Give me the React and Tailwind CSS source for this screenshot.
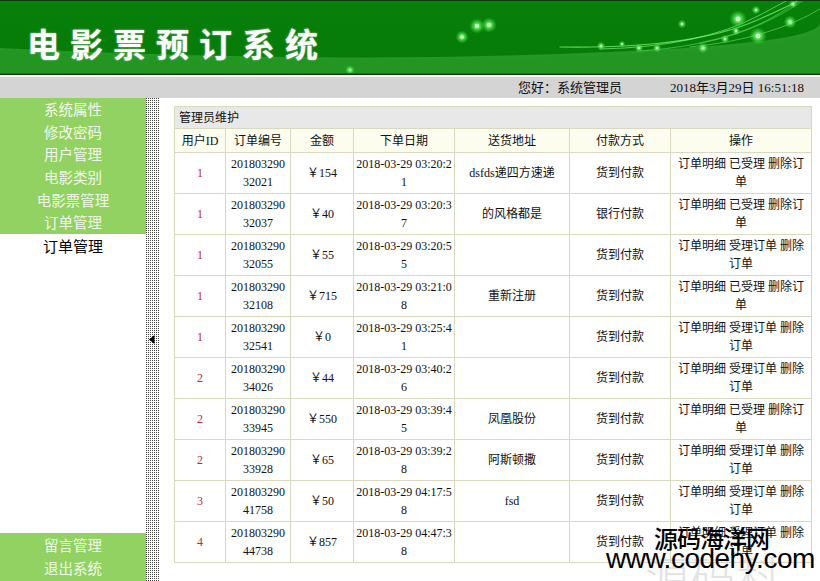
import React from "react";

const rows = [
  ["1", "20180329032021", "￥154", "2018-03-29 03:20:21", "dsfds递四方速递", "货到付款", "订单明细 已受理 删除订单"],
  ["1", "20180329032037", "￥40", "2018-03-29 03:20:37", "的风格都是", "银行付款", "订单明细 已受理 删除订单"],
  ["1", "20180329032055", "￥55", "2018-03-29 03:20:55", "", "货到付款", "订单明细 受理订单 删除订单"],
  ["1", "20180329032108", "￥715", "2018-03-29 03:21:08", "重新注册", "货到付款", "订单明细 已受理 删除订单"],
  ["1", "20180329032541", "￥0", "2018-03-29 03:25:41", "", "货到付款", "订单明细 受理订单 删除订单"],
  ["2", "20180329034026", "￥44", "2018-03-29 03:40:26", "", "货到付款", "订单明细 受理订单 删除订单"],
  ["2", "20180329033945", "￥550", "2018-03-29 03:39:45", "凤凰股份", "货到付款", "订单明细 已受理 删除订单"],
  ["2", "20180329033928", "￥65", "2018-03-29 03:39:28", "阿斯顿撒", "货到付款", "订单明细 受理订单 删除订单"],
  ["3", "20180329041758", "￥50", "2018-03-29 04:17:58", "fsd", "货到付款", "订单明细 受理订单 删除订单"],
  ["4", "20180329044738", "￥857", "2018-03-29 04:47:38", "", "货到付款", "订单明细 受理订单 删除订单"],
];

const dots = [
  [462, 36, 3], [477, 25, 3.5], [489, 24, 3.5], [682, 23, 2], [601, 45, 2], [622, 43, 1.5],
  [639, 47, 2], [657, 47, 2], [703, 47, 2.5], [725, 38, 2], [736, 30, 2], [758, 35, 4],
  [756, 9, 2], [790, 21, 3], [793, 3, 2], [738, 18, 4],
];

function HeaderArt() {
  return (
    <svg width="820" height="72" viewBox="0 0 820 72" className="block">
      <defs>
        <radialGradient id="glow">
          <stop offset="0%" stopColor="#b8ffb0" stopOpacity="1" />
          <stop offset="40%" stopColor="#5cf05c" stopOpacity="0.8" />
          <stop offset="100%" stopColor="#2fd02f" stopOpacity="0" />
        </radialGradient>
        <linearGradient id="bg" x1="0" y1="0" x2="0" y2="1">
          <stop offset="0%" stopColor="#08800a" />
          <stop offset="100%" stopColor="#067a08" />
        </linearGradient>
      </defs>
      <rect width="820" height="72" fill="url(#bg)" />
      <path d="M0,47 Q300,62 560,53 T820,22 L820,72 L0,72Z" fill="#249824" />
      <path d="M0,50 Q300,64 560,56 T820,26 L820,72 L0,72Z" fill="#1f921f" opacity="0.5" />
      <g fill="none" strokeLinecap="round">
        <path d="M560,46 Q690,48 755,20 T795,-5" stroke="#6cf06c" strokeWidth="1.2" opacity="0.8" />
        <path d="M600,48 Q700,46 760,14 T790,-4" stroke="#9cff9c" strokeWidth="0.8" opacity="0.7" />
        <path d="M640,50 Q730,44 780,12 T812,-3" stroke="#5ee05e" strokeWidth="1" opacity="0.6" />
        <path d="M690,46 Q770,38 820,8" stroke="#a8ffa8" strokeWidth="0.7" opacity="0.6" />
        <path d="M700,42 Q760,30 805,-2" stroke="#4fd04f" strokeWidth="1.4" opacity="0.5" />
      </g>
      {dots.map(([x, y, r], i) => (
        <g key={i}>
          <circle cx={x} cy={y} r={r * 2.2} fill="url(#glow)" />
          <circle cx={x} cy={y} r={r * 0.6} fill="#d8ffd0" />
        </g>
      ))}
      <circle cx="350" cy="69" r="5" fill="url(#glow)" />
    </svg>
  );
}

const border = "border border-[#d9d9bf]";

export default function App() {
  return (
    <div className="relative w-[820px] h-[581px] overflow-hidden bg-white font-['Liberation_Serif','Noto_Sans_CJK_SC',serif] text-[12px] text-[#111]">
      {/* Header banner */}
      <div className="relative h-[75px] border-y border-[#0c3a0c] bg-[#08800a]">
        <HeaderArt />
        <div className="absolute left-[27px] top-[22px] font-['Noto_Sans_CJK_SC',sans-serif] text-[33px] font-bold leading-[40px] tracking-[10px] text-white [text-shadow:0_0_2px_rgba(255,255,255,0.6)]">
          电影票预订系统
        </div>
      </div>
      <div className="h-[2px] bg-white" />
      {/* Info bar */}
      <div className="flex h-[21px] items-end justify-end bg-[#d4d4d4] pb-[1px] pr-[16px] text-[13px] leading-[18px]">
        <span className="mr-[48px]">您好：系统管理员</span>
        <span>2018年3月29日 16:51:18</span>
      </div>

      <div className="flex h-[483px]">
        {/* Sidebar */}
        <div className="flex w-[147px] flex-col font-['Noto_Sans_CJK_SC',sans-serif] text-[14.5px]">
          <div className="flex flex-col bg-[#92d263] text-center text-[#f2f7ee]">
            {["系统属性", "修改密码", "用户管理", "电影类别", "电影票管理", "订单管理"].map((t) => (
              <div key={t} className="h-[22.7px] leading-[22.7px]">{t}</div>
            ))}
          </div>
          <div className="h-[23px] text-center text-[15px] leading-[23px] text-black">订单管理</div>
          <div className="mt-auto flex h-[48px] flex-col bg-[#92d263] text-center text-[#f2f7ee]">
            <div className="h-[23px] leading-[23px]">留言管理</div>
            <div className="h-[23px] leading-[23px]">退出系统</div>
          </div>
        </div>

        {/* Dotted splitter */}
        <div className="flex w-[13px] items-center justify-center bg-white bg-[image:conic-gradient(at_1px_1px,transparent_75%,#444_0)] bg-[length:2px_2px]">
          <svg width="6" height="9" viewBox="0 0 6 9" className="ml-[-1px] block">
            <path d="M5.5,0 L0,4.5 L5.5,9Z" fill="#000" />
          </svg>
        </div>

        {/* Main */}
        <div className="flex-1 pl-[15px] pr-[8px] pt-[8px]">
          <table className="w-[637px] table-fixed border-collapse break-all">
            <colgroup>
              <col className="w-[51px]" />
              <col className="w-[65px]" />
              <col className="w-[63px]" />
              <col className="w-[101px]" />
              <col className="w-[115px]" />
              <col className="w-[101px]" />
              <col className="w-[141px]" />
            </colgroup>
            <thead>
              <tr>
                <td colSpan={7} className={`${border} h-[22px] bg-[#e8e8e8] px-[4px] text-left leading-[18px]`}>
                  管理员维护
                </td>
              </tr>
              <tr className="bg-[#fcfcef]">
                {["用户ID", "订单编号", "金额", "下单日期", "送货地址", "付款方式", "操作"].map((h) => (
                  <td key={h} className={`${border} h-[24px] px-[2px] text-center leading-[18px]`}>{h}</td>
                ))}
              </tr>
            </thead>
            <tbody>
              {rows.map((r, i) => (
                <tr key={i} className="bg-white">
                  <td className={`${border} h-[41px] px-[2px] text-center leading-[18px] text-[#c0282d]`}>{r[0]}</td>
                  <td className={`${border} px-[4px] text-center leading-[18px]`}>{r[1]}</td>
                  <td className={`${border} px-[2px] text-center leading-[18px]`}>{r[2]}</td>
                  <td className={`${border} px-[1px] text-center leading-[18px]`}>{r[3]}</td>
                  <td className={`${border} px-[2px] text-center leading-[18px]`}>{r[4]}</td>
                  <td className={`${border} px-[2px] text-center leading-[18px]`}>{r[5]}</td>
                  <td className={`${border} px-[3px] text-center leading-[18px]`}>{r[6]}</td>
                </tr>
              ))}
            </tbody>
          </table>
        </div>
      </div>

      {/* Watermark overlay */}
      <div className="pointer-events-none absolute left-[645px] top-[550px] font-['Noto_Sans_CJK_SC',sans-serif] text-[44px] font-light leading-[50px] tracking-[2px] text-[#d6d6d6] opacity-70">
        源码科技
      </div>
      <div className="pointer-events-none absolute left-[654px] top-[524px] font-['Noto_Sans_CJK_SC',sans-serif] text-[24px] font-medium leading-[28px] tracking-[-1px] text-black">
        源码海洋网
      </div>
      <div className="pointer-events-none absolute left-[606px] top-[545px] font-['Liberation_Sans',sans-serif] text-[28px] leading-[28px] tracking-[-0.5px] text-black">
        www.codehy.com
      </div>
    </div>
  );
}
